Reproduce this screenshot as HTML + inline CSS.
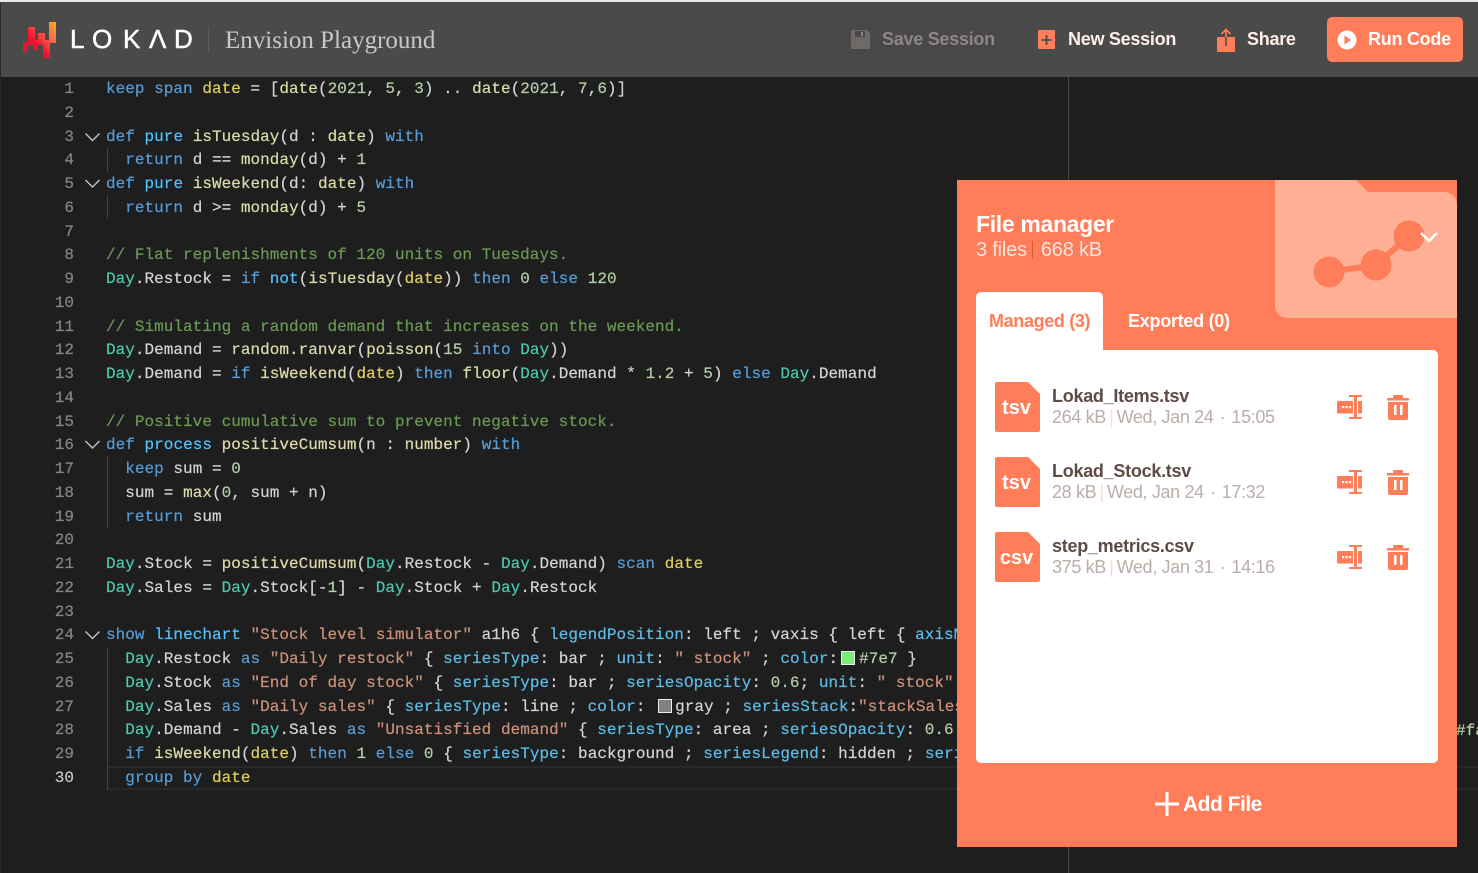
<!DOCTYPE html>
<html lang="en"><head><meta charset="utf-8"><title>Envision Playground</title>
<style>
*{box-sizing:border-box}
html,body{margin:0;padding:0;width:1478px;height:873px;overflow:hidden;background:#1e1e1e}
body{position:relative;font-family:"Liberation Sans",sans-serif}
.a{position:absolute}
#top{left:0;top:0;width:1478px;height:2px;background:#e8e8e8}
#hd{left:1px;top:2px;width:1477px;height:75px;background:#4a4a4a}
.btn{position:absolute;top:28px;font-weight:bold;font-size:18px;letter-spacing:-.27px;line-height:22px;color:#fff0ea;white-space:nowrap}
#ed{left:0;top:76px;width:1478px;height:760px;overflow:hidden;font-family:"Liberation Mono",monospace;font-size:16px;letter-spacing:.03px;color:#d4d4d4;-webkit-text-stroke:.2px}
#code{position:absolute;left:106px;top:2px;line-height:23.76px}
#code div{height:23.76px;white-space:pre}
#nums{position:absolute;left:30px;width:44px;top:2px;text-align:right;line-height:23.76px;color:#858585}
#nums div{height:23.76px}
.k{color:#569cd6}.t{color:#4ec9b0}.f{color:#dcdcaa}.v{color:#e0cf5e}.b{color:#4fc1ff}.p{color:#5cbce8}.n{color:#b5cea8}.s{color:#ce9178}.c{color:#6a9955}
.sq{display:inline-block;width:14px;height:14px;border:1px solid #eee;margin:0 4px 0 3px;vertical-align:-2px}
.g{position:absolute;left:107px;width:1px;background:#444}
#pn{left:957px;top:180px;width:500px;height:667px;background:#ff7d58;overflow:hidden}
.name{position:absolute;left:1052px;font-size:18px;font-weight:bold;letter-spacing:-.27px;line-height:22px;color:#5f4b45;white-space:nowrap}
.sub{position:absolute;left:1052px;font-size:18px;letter-spacing:-.35px;line-height:22px;color:#baaeaa;white-space:nowrap}
.sub i{font-style:normal;color:#ffd9cd;margin:0 -1.5px}
.sub u{text-decoration:none;margin:0 1.5px}
.ty{position:absolute;left:994px;width:45px;text-align:center;color:#fff;font-weight:bold;font-size:20px;line-height:24px}
</style></head><body>
<div class="a" id="top"></div>
<div class="a" style="left:0;top:2px;width:1px;height:871px;background:#2a2a2a"></div>
<div class="a" id="hd"></div>

<svg class="a" style="left:20px;top:20px" width="40" height="40" viewBox="20 20 40 40">
<defs><linearGradient id="lg" x1="0" y1="1" x2="1" y2="0"><stop offset="0" stop-color="#c9203c"/><stop offset=".4" stop-color="#f01030"/><stop offset=".7" stop-color="#fb6a4a"/><stop offset="1" stop-color="#fbb01c"/></linearGradient></defs>
<path fill="url(#lg)" d="M23 42H28V27H35V40H38V33H45V40H49V22H56V43H50V58H43V45H38V50H33V45H28V52H23Z"/>
</svg>
<div class="a" style="left:70px;top:24px;color:#fff;font-size:26px;line-height:30px;height:30px;width:130px;white-space:nowrap;-webkit-text-stroke:.5px #fff">
<span class="a" style="left:0">L</span><span class="a" style="left:22px">O</span><span class="a" style="left:53px">K</span><span class="a" style="left:79px">Λ</span><span class="a" style="left:104px">D</span></div>
<div class="a" style="left:208px;top:26px;width:1px;height:27px;background:#5c5c5c"></div>
<div class="a" style="left:225px;top:26px;font-family:'Liberation Serif',serif;font-size:25px;line-height:30px;color:#c8c8c8;white-space:nowrap">Envision Playground</div>

<div class="a" style="left:841px;top:19px;width:167px;height:41px;background:#484848;border-radius:3px"></div>
<svg class="a" style="left:851px;top:30px" width="19" height="19" viewBox="0 0 19 19"><path fill="#6f6967" d="M1 0h15l3 3v15a1 1 0 0 1-1 1H1a1 1 0 0 1-1-1V1a1 1 0 0 1 1-1z"/><rect x="4" y="1" width="10" height="6" fill="#4a4a4a"/><rect x="10" y="2" width="2" height="4" fill="#8d8583"/></svg>
<div class="btn" style="left:882px;color:#8f8683">Save Session</div>

<svg class="a" style="left:1038px;top:30px" width="17" height="19" viewBox="0 0 17 19"><rect width="17" height="19" y="0" fill="#ff7d58" rx="1"/><path d="M8.5 5v10M3.500 10h10" stroke="#4a4a4a" stroke-width="1.800"/></svg>
<div class="btn" style="left:1068px">New Session</div>

<svg class="a" style="left:1217px;top:28px" width="18" height="24" viewBox="0 0 18 24"><path fill="#ff7d58" d="M1 9h16a1 1 0 0 1 1 1v13a1 1 0 0 1-1 1H1a1 1 0 0 1-1-1V10a1 1 0 0 1 1-1z"/><path d="M9 18V3" stroke="#4a4a4a" stroke-width="1.500"/><path d="M9 1v8M4.500 6L9 1.500 13.500 6" fill="none" stroke="#ff7d58" stroke-width="1.600"/></svg>
<div class="btn" style="left:1247px">Share</div>

<div class="a" style="left:1327px;top:17px;width:136px;height:45px;background:#ff7d58;border-radius:5px"></div>
<svg class="a" style="left:1337px;top:30px" width="20" height="20" viewBox="0 0 20 20"><circle cx="10" cy="10" r="9.500" fill="#fff"/><path d="M7.500 5.500L14 10l-6.500 4.500z" fill="#ff7d58"/></svg>
<div class="btn" style="left:1368px;color:#fff">Run Code</div>

<div class="a" id="ed">
<div class="a" style="left:108px;top:690px;width:1370px;height:24px;border-top:2px solid #282828;border-bottom:2px solid #282828"></div>
<div class="g" style="top:72px;height:24px"></div>
<div class="g" style="top:119px;height:24px"></div>
<div class="g" style="top:380px;height:72px"></div>
<div class="g" style="top:571px;height:143px"></div>
<div id="nums"><div>1</div><div>2</div><div>3</div><div>4</div><div>5</div><div>6</div><div>7</div><div>8</div><div>9</div><div>10</div><div>11</div><div>12</div><div>13</div><div>14</div><div>15</div><div>16</div><div>17</div><div>18</div><div>19</div><div>20</div><div>21</div><div>22</div><div>23</div><div>24</div><div>25</div><div>26</div><div>27</div><div>28</div><div>29</div><div style="color:#c6c6c6">30</div></div>
<svg class="a" style="left:84px;top:1px" width="18" height="600" viewBox="0 0 18 600" fill="none" stroke="#c5c5c5" stroke-width="1.400"><path d="M1.500 56.500L8.500 63.500 15.500 56.500M1.500 103L8.500 110 15.500 103M1.500 364L8.500 371 15.500 364"/><path d="M1.500 554.500L8.500 561.500 15.500 554.500"/></svg>
<div id="code"><div><span class="k">keep span</span> <span class="v">date</span> = [<span class="f">date</span>(<span class="n">2021</span>, <span class="n">5</span>, <span class="n">3</span>) .. <span class="f">date</span>(<span class="n">2021</span>, <span class="n">7</span>,<span class="n">6</span>)]</div><div> </div><div><span class="k">def</span> <span class="b">pure</span> <span class="f">isTuesday</span>(d : <span class="f">date</span>) <span class="k">with</span></div><div>  <span class="k">return</span> d == <span class="f">monday</span>(d) + <span class="n">1</span></div><div><span class="k">def</span> <span class="b">pure</span> <span class="f">isWeekend</span>(d: <span class="f">date</span>) <span class="k">with</span></div><div>  <span class="k">return</span> d &gt;= <span class="f">monday</span>(d) + <span class="n">5</span></div><div> </div><div><span class="c">// Flat replenishments of 120 units on Tuesdays.</span></div><div><span class="t">Day</span>.Restock = <span class="k">if</span> <span class="b">not</span>(<span class="f">isTuesday</span>(<span class="v">date</span>)) <span class="k">then</span> <span class="n">0</span> <span class="k">else</span> <span class="n">120</span></div><div> </div><div><span class="c">// Simulating a random demand that increases on the weekend.</span></div><div><span class="t">Day</span>.Demand = <span class="f">random.ranvar</span>(<span class="f">poisson</span>(<span class="n">15</span> <span class="k">into</span> <span class="t">Day</span>))</div><div><span class="t">Day</span>.Demand = <span class="k">if</span> <span class="f">isWeekend</span>(<span class="v">date</span>) <span class="k">then</span> <span class="f">floor</span>(<span class="t">Day</span>.Demand * <span class="n">1.2</span> + <span class="n">5</span>) <span class="k">else</span> <span class="t">Day</span>.Demand</div><div> </div><div><span class="c">// Positive cumulative sum to prevent negative stock.</span></div><div><span class="k">def</span> <span class="b">process</span> <span class="f">positiveCumsum</span>(n : <span class="f">number</span>) <span class="k">with</span></div><div>  <span class="k">keep</span> sum = <span class="n">0</span></div><div>  sum = <span class="f">max</span>(<span class="n">0</span>, sum + n)</div><div>  <span class="k">return</span> sum</div><div> </div><div><span class="t">Day</span>.Stock = <span class="f">positiveCumsum</span>(<span class="t">Day</span>.Restock - <span class="t">Day</span>.Demand) <span class="k">scan</span> <span class="v">date</span></div><div><span class="t">Day</span>.Sales = <span class="t">Day</span>.Stock[-<span class="n">1</span>] - <span class="t">Day</span>.Stock + <span class="t">Day</span>.Restock</div><div> </div><div><span class="k">show</span> <span class="b">linechart</span> <span class="s">"Stock level simulator"</span> a1h6 { <span class="p">legendPosition</span>: left ; vaxis { left { <span class="p">axisMin</span>: <span class="n">0</span> } } }</div><div>  <span class="t">Day</span>.Restock <span class="k">as</span> <span class="s">"Daily restock"</span> { <span class="p">seriesType</span>: bar ; <span class="p">unit</span>: <span class="s">" stock"</span> ; <span class="p">color</span>:<span class="sq" style="background:#77ee77"></span><span class="n">#7e7</span> }</div><div>  <span class="t">Day</span>.Stock <span class="k">as</span> <span class="s">"End of day stock"</span> { <span class="p">seriesType</span>: bar ; <span class="p">seriesOpacity</span>: <span class="n">0.6</span>; <span class="p">unit</span>: <span class="s">" stock"</span> }</div><div>  <span class="t">Day</span>.Sales <span class="k">as</span> <span class="s">"Daily sales"</span> { <span class="p">seriesType</span>: line ; <span class="p">color</span>: <span class="sq" style="background:#808080;margin-right:3px"></span>gray ; <span class="p">seriesStack</span>:<span class="s">"stackSales"</span> }</div><div>  <span class="t">Day</span>.Demand - <span class="t">Day</span>.Sales <span class="k">as</span> <span class="s">"Unsatisfied demand"</span> { <span class="p">seriesType</span>: area ; <span class="p">seriesOpacity</span>: <span class="n">0.6</span></div><div>  <span class="k">if</span> <span class="f">isWeekend</span>(<span class="v">date</span>) <span class="k">then</span> <span class="n">1</span> <span class="k">else</span> <span class="n">0</span> { <span class="p">seriesType</span>: background ; <span class="p">seriesLegend</span>: hidden ; <span class="p">seriesOpacity</span> }</div><div>  <span class="k">group by</span> <span class="v">date</span></div></div>
<div class="a n" style="left:1456px;top:643.500px;line-height:23.760px">#fa</div>
</div>
<div class="a" style="left:1068px;top:77px;width:1px;height:796px;background:#4a4a4a"></div>

<div class="a" id="pn"></div>
<svg class="a" style="left:1275px;top:180px" width="182" height="138" viewBox="0 0 182 138">
<path fill="#ffb094" d="M0 0H81L93 12H168Q182 12 182 26V138H14Q0 138 0 124z"/>
<path d="M54 92L101 85L135 55" stroke="#ff7d58" stroke-width="6" fill="none"/>
<circle cx="54" cy="92" r="15.500" fill="#ff7d58"/><circle cx="101" cy="85" r="15.500" fill="#ff7d58"/><circle cx="134" cy="56" r="15.500" fill="#ff7d58"/>
<path d="M146 53L154 61 162 53" fill="none" stroke="#fff" stroke-width="2.500"/>
</svg>
<div class="a" style="left:976px;top:210px;font-size:23px;letter-spacing:-.33px;font-weight:bold;line-height:28px;color:#fff;white-space:nowrap">File manager</div>
<div class="a" style="left:976px;top:238px;font-size:20px;letter-spacing:-.2px;line-height:24px;color:#f5e4de;white-space:nowrap">3 files<span style="display:inline-block;width:1px;height:18px;background:#d9583a;margin:0 8px 0 5px;vertical-align:-3px"></span>668 kB</div>

<div class="a" style="left:976px;top:292px;width:127px;height:60px;background:#fff;border-radius:5px 5px 0 0"></div>
<div class="a" style="left:976px;top:350px;width:462px;height:413px;background:#fff;border-radius:0 5px 5px 5px"></div>
<div class="a" style="left:989px;top:310px;font-size:18px;font-weight:bold;letter-spacing:-.35px;line-height:22px;color:#ff7d58;white-space:nowrap">Managed (3)</div>
<div class="a" style="left:1128px;top:310px;font-size:18px;font-weight:bold;letter-spacing:-.27px;line-height:22px;color:#fff;white-space:nowrap">Exported (0)</div>

<svg class="a" style="left:995px;top:382px" width="45" height="200" viewBox="0 0 45 200" fill="#ff7d58">
<path d="M2 0H33L45 12V48a2 2 0 0 1-2 2H2a2 2 0 0 1-2-2V2a2 2 0 0 1 2-2z"/>
<path d="M2 75H33L45 87V123a2 2 0 0 1-2 2H2a2 2 0 0 1-2-2V77a2 2 0 0 1 2-2z"/>
<path d="M2 150H33L45 162V198a2 2 0 0 1-2 2H2a2 2 0 0 1-2-2V152a2 2 0 0 1 2-2z"/>
</svg>
<div class="ty" style="top:396px">tsv</div><div class="ty" style="top:471px">tsv</div><div class="ty" style="top:546px">csv</div>

<div class="name" style="top:385px">Lokad_Items.tsv</div>
<div class="sub" style="top:406px">264 kB <i>|</i> Wed, Jan 24 <u>·</u> 15:05</div>
<div class="name" style="top:460px">Lokad_Stock.tsv</div>
<div class="sub" style="top:481px">28 kB <i>|</i> Wed, Jan 24 <u>·</u> 17:32</div>
<div class="name" style="top:535px">step_metrics.csv</div>
<div class="sub" style="top:556px">375 kB <i>|</i> Wed, Jan 31 <u>·</u> 14:16</div>

<svg class="a" style="left:1337px;top:395px" width="74" height="176" viewBox="0 0 74 176">
<g><rect x="0" y="6" width="16" height="12.500" rx="1" fill="#ff7d58"/><rect x="5" y="11" width="2.200" height="2.200" fill="#fff"/><rect x="8.500" y="11" width="2.200" height="2.200" fill="#fff"/><rect x="12" y="11" width="2.200" height="2.200" fill="#fff"/><path fill="#ff7d58" d="M12 0h13v2h-5v20h5v2H12v-2h5V2h-5z"/><rect x="21" y="6" width="4" height="12.500" fill="#ff7d58"/>
<path fill="#ff7d58" d="M50 3h6V1a1 1 0 0 1 1-1h8a1 1 0 0 1 1 1v2h6v2.500H50z"/><path fill="#ff7d58" fill-rule="evenodd" d="M51 7h20v16a2 2 0 0 1-2 2H53a2 2 0 0 1-2-2zM57 10v10h2.500V10zM63 10v10h2.500V10z"/></g>
<g transform="translate(0,75)"><rect x="0" y="6" width="16" height="12.500" rx="1" fill="#ff7d58"/><rect x="5" y="11" width="2.200" height="2.200" fill="#fff"/><rect x="8.500" y="11" width="2.200" height="2.200" fill="#fff"/><rect x="12" y="11" width="2.200" height="2.200" fill="#fff"/><path fill="#ff7d58" d="M12 0h13v2h-5v20h5v2H12v-2h5V2h-5z"/><rect x="21" y="6" width="4" height="12.500" fill="#ff7d58"/>
<path fill="#ff7d58" d="M50 3h6V1a1 1 0 0 1 1-1h8a1 1 0 0 1 1 1v2h6v2.500H50z"/><path fill="#ff7d58" fill-rule="evenodd" d="M51 7h20v16a2 2 0 0 1-2 2H53a2 2 0 0 1-2-2zM57 10v10h2.500V10zM63 10v10h2.500V10z"/></g>
<g transform="translate(0,150)"><rect x="0" y="6" width="16" height="12.500" rx="1" fill="#ff7d58"/><rect x="5" y="11" width="2.200" height="2.200" fill="#fff"/><rect x="8.500" y="11" width="2.200" height="2.200" fill="#fff"/><rect x="12" y="11" width="2.200" height="2.200" fill="#fff"/><path fill="#ff7d58" d="M12 0h13v2h-5v20h5v2H12v-2h5V2h-5z"/><rect x="21" y="6" width="4" height="12.500" fill="#ff7d58"/>
<path fill="#ff7d58" d="M50 3h6V1a1 1 0 0 1 1-1h8a1 1 0 0 1 1 1v2h6v2.500H50z"/><path fill="#ff7d58" fill-rule="evenodd" d="M51 7h20v16a2 2 0 0 1-2 2H53a2 2 0 0 1-2-2zM57 10v10h2.500V10zM63 10v10h2.500V10z"/></g>
</svg>

<svg class="a" style="left:1155px;top:792px" width="24" height="24" viewBox="0 0 24 24"><path d="M12 0v24M0 12h24" stroke="#fff" stroke-width="3"/></svg>
<div class="a" style="left:1183px;top:792px;font-size:21px;letter-spacing:-.5px;font-weight:bold;line-height:26px;color:#fff;white-space:nowrap">Add File</div>
</body></html>
